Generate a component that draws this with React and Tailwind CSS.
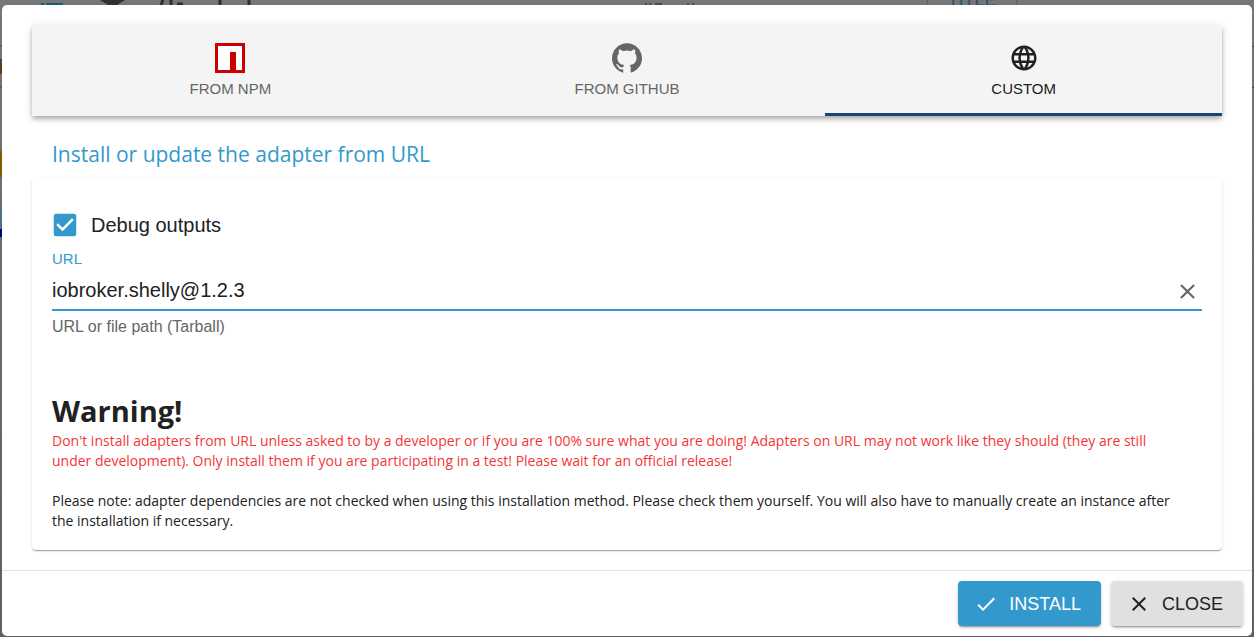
import React, { useState } from 'react';
import { SiGithub } from 'react-icons/si';
import { MdLanguage, MdCheck, MdClose, MdCheckBox, MdCheckBoxOutlineBlank } from 'react-icons/md';

const TABS = [
  { id: 'npm', label: 'FROM NPM' },
  { id: 'github', label: 'FROM GITHUB' },
  { id: 'custom', label: 'CUSTOM' },
];

function NpmIcon() {
  return (
    <svg width="30" height="30" viewBox="0 0 30 30" aria-hidden="true">
      <rect width="30" height="30" fill="#cb0000" />
      <path d="M3 3h24v24h-6V9h-6v18H3z" fill="#fff" />
    </svg>
  );
}

function TabIcon({ id }) {
  if (id === 'npm') return <NpmIcon />;
  if (id === 'github') return <SiGithub size={30} />;
  return <MdLanguage size={30} />;
}

// Adapter list under the backdrop, only its outer edge shows around the dialog
function PageBehind() {
  return (
    <div className="absolute inset-0 overflow-hidden bg-linear-to-b from-[#767676] to-[#606060]" aria-hidden="true">
      <svg className="block size-full">
        <path d="M41 3h3v2h-3zM46 3h17v2H46z" fill="#1b567a" />
        <path d="M100 0h25l-8 5h-9z" fill="#303030" />
        <path d="M163 0l-2 5M171 0v5M177 4h6M220 0v5M249 0v5" stroke="#303030" strokeWidth="3" />
        <path d="M645 4h2M649 4h2M655 4h7M687 4h2M692 4h2" stroke="#222" />
        <path d="M0 46h2M0 87h2" stroke="#7a3f10" />
        <path d="M1 59v15" stroke="#5a4020" strokeWidth="2" />
        <path d="M1 151v26" stroke="#7a6000" strokeWidth="2" />
        <path d="M1 209v30" stroke="#4a7186" strokeWidth="2" />
        <path d="M1 229v8" stroke="#00007c" strokeWidth="2" />
      </svg>
      <div className="absolute -top-3 left-[927px] w-[90px] border-x border-[#4b6b7c] text-center text-lg leading-6 text-[#1b567a]">
        TITLE
      </div>
      <div className="absolute top-0 right-0 h-full w-[2px]">
        <div className="mt-[46px] h-px bg-[#7a3f10]" />
        <div className="mt-10 h-px bg-[#7a3f10]" />
      </div>
    </div>
  );
}

export default function App() {
  const [tab, setTab] = useState('custom');
  const [debug, setDebug] = useState(true);
  const [url, setUrl] = useState('iobroker.shelly@1.2.3');

  return (
    <div className="relative h-screen px-[2px] pt-[5px] pb-px font-['Liberation_Sans',Arial,sans-serif] text-[#212121]">
      <PageBehind />
      <div role="dialog" aria-label="Install adapter" className="relative flex h-full flex-col rounded-[5px] bg-white">
        <div className="flex-1 px-[30px] pt-5 pb-5">
          {/* Source tabs */}
          <div
            role="tablist"
            className="flex h-[91px] rounded-t bg-[#f4f4f4] shadow-[0px_2px_4px_-1px_rgba(0,0,0,0.2),0px_4px_5px_0px_rgba(0,0,0,0.14),0px_1px_10px_0px_rgba(0,0,0,0.12)]"
          >
            {TABS.map((t) => (
              <button
                key={t.id}
                type="button"
                role="tab"
                aria-selected={tab === t.id}
                onClick={() => setTab(t.id)}
                className={`flex flex-1 cursor-pointer flex-col items-center gap-1 border-b-3 pt-[18px] text-[15px] leading-6 ${
                  tab === t.id ? 'border-[#164477] text-[#212121]' : 'border-transparent text-[#666666]'
                }`}
              >
                <TabIcon id={t.id} />
                {t.label}
              </button>
            ))}
          </div>

          <h2 className="px-5 pt-[22px] pb-2 font-['Open_Sans','Noto_Sans',sans-serif] text-[21px] leading-8 text-[#3399cc]">
            Install or update the adapter from URL
          </h2>

          <div className="rounded px-5 pt-[31px] pb-[19px] shadow-[0px_2px_1px_-1px_rgba(0,0,0,0.2),0px_1px_1px_0px_rgba(0,0,0,0.14),0px_1px_3px_0px_rgba(0,0,0,0.12)]">
            <label className="-ml-0.5 flex w-fit cursor-pointer items-center gap-[11px] text-xl leading-8">
              <input
                type="checkbox"
                checked={debug}
                onChange={(e) => setDebug(e.target.checked)}
                className="sr-only"
              />
              {debug ? (
                <MdCheckBox size={30} className="text-[#3399cc]" />
              ) : (
                <MdCheckBoxOutlineBlank size={30} className="text-[#666666]" />
              )}
              Debug outputs
            </label>

            <label htmlFor="url" className="block pt-2 text-[15px] leading-5 text-[#3399cc]">
              URL
            </label>
            <div className="flex items-center border-b-2 border-[#3399cc] pr-[2px]">
              <input
                id="url"
                type="text"
                value={url}
                onChange={(e) => setUrl(e.target.value)}
                className="h-10 min-w-0 flex-1 pt-0.5 text-xl outline-none"
              />
              <button
                type="button"
                aria-label="Clear"
                onClick={() => setUrl('')}
                className="cursor-pointer pt-1 text-[#666666]"
              >
                <MdClose size={25} />
              </button>
            </div>
            <p className="pt-1.5 text-base leading-5 text-[#666666]">URL or file path (Tarball)</p>

            <div className="pt-[54px] pr-5 font-['Open_Sans','Noto_Sans',sans-serif] text-sm leading-5">
              <h1 className="text-[29px] leading-10 font-bold">Warning!</h1>
              <p className="text-[#f43636]">
                Don't install adapters from URL unless asked to by a developer or if you are 100% sure what you are
                doing! Adapters on URL may not work like they should (they are still under development). Only install
                them if you are participating in a test! Please wait for an official release!
              </p>
              <p className="pt-5">
                Please note: adapter dependencies are not checked when using this installation method. Please check them
                yourself. You will also have to manually create an instance after the installation if necessary.
              </p>
            </div>
          </div>
        </div>

        <div className="flex justify-end gap-2.5 border-t border-[#e0e0e0] py-2.5 pr-[9px]">
          <button
            type="button"
            className="flex h-[45px] cursor-pointer items-center gap-[11px] rounded bg-[#3399cc] pr-5 pl-4 text-lg text-white shadow-[0px_3px_1px_-2px_rgba(0,0,0,0.2),0px_2px_2px_0px_rgba(0,0,0,0.14),0px_1px_5px_0px_rgba(0,0,0,0.12)]"
          >
            <MdCheck size={24} />
            INSTALL
          </button>
          <button
            type="button"
            className="flex h-[45px] cursor-pointer items-center gap-[11px] rounded bg-[#e0e0e0] pr-5 pl-4 text-lg shadow-[0px_3px_1px_-2px_rgba(0,0,0,0.2),0px_2px_2px_0px_rgba(0,0,0,0.14),0px_1px_5px_0px_rgba(0,0,0,0.12)]"
          >
            <MdClose size={24} />
            CLOSE
          </button>
        </div>
      </div>
    </div>
  );
}
